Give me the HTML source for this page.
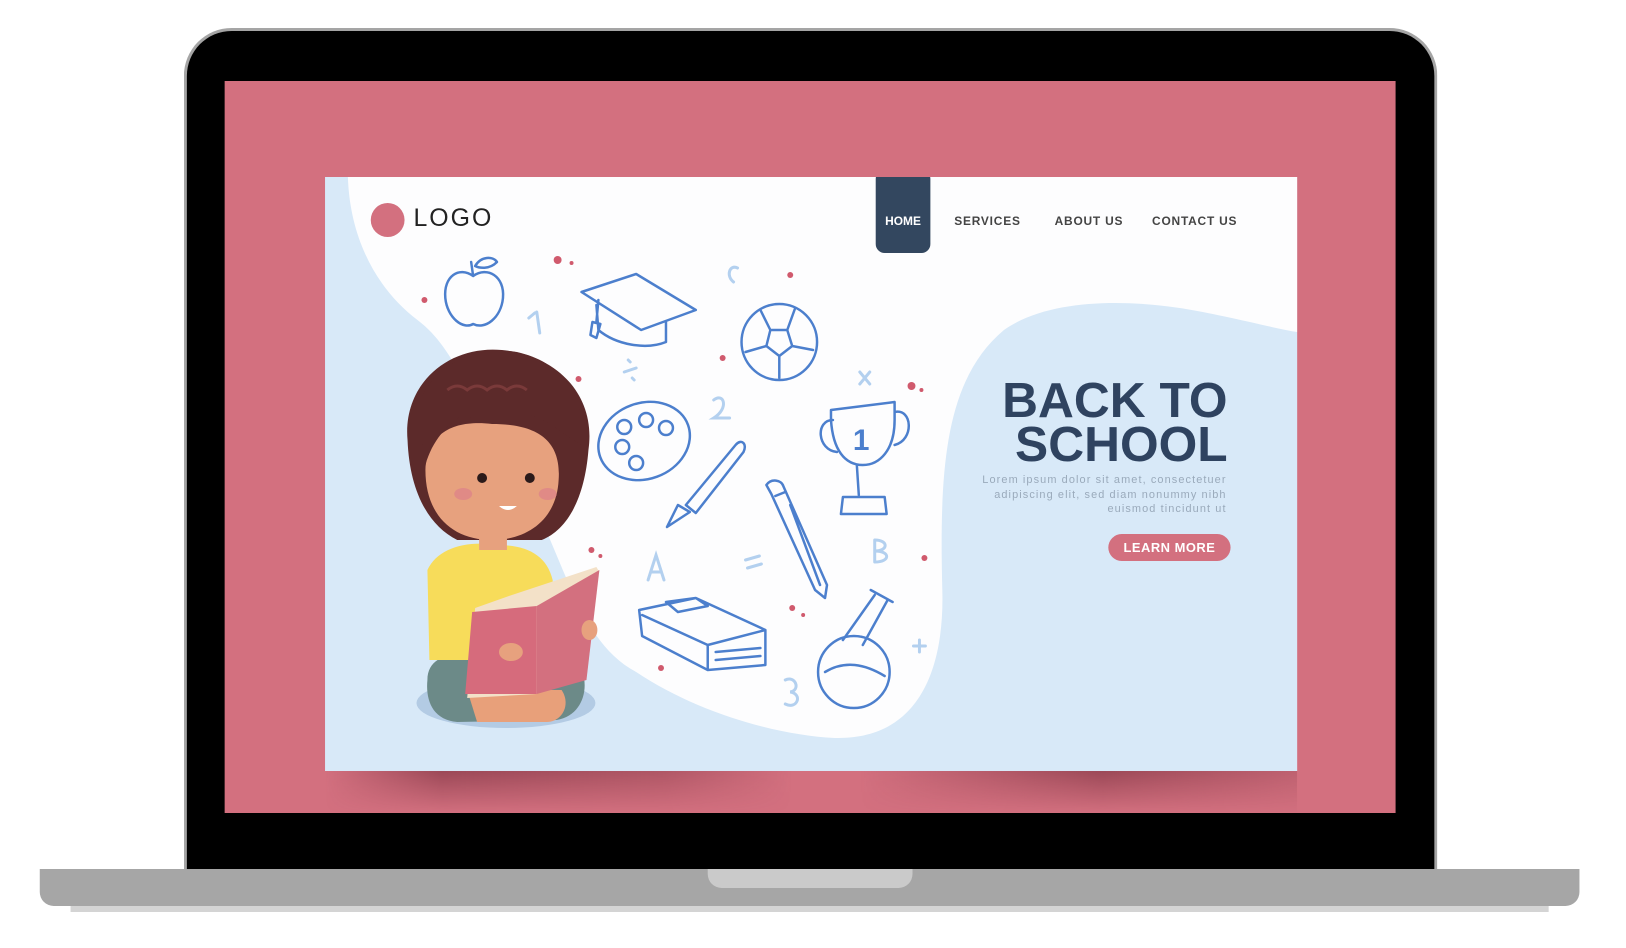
<!DOCTYPE html>
<html><head><meta charset="utf-8"><style>
*{margin:0;padding:0;box-sizing:border-box}
body{width:1626px;height:948px;background:#fff;position:relative;overflow:hidden;font-family:"Liberation Sans",sans-serif}
#w{position:absolute;left:0;top:0;width:1626px;height:948px;transform:scaleX(0.994);transform-origin:0 0}
.bezel{position:absolute;left:185px;top:28px;width:1261px;height:860px;background:#000;border:3px solid #a5a5a5;border-bottom:none;border-radius:48px 48px 0 0}
.pink{position:absolute;left:226px;top:81px;width:1178px;height:732px;background:#d3707f;overflow:hidden}
.base{position:absolute;left:40px;top:869px;width:1549px;height:37px;background:#a6a6a6;border-radius:0 0 14px 14px}
.strip{position:absolute;left:71px;top:906px;width:1487px;height:6px;background:#d4d4d4}
.notch{position:absolute;left:712px;top:869px;width:206px;height:19px;background:#cacaca;border-radius:0 0 14px 14px}
.page{position:absolute;left:327px;top:177px;width:978px;height:594px;background:#d8e9f8;overflow:hidden}
.shadow{position:absolute;left:327px;top:771px;width:978px;height:42px;background:linear-gradient(90deg,rgba(120,50,60,.0),rgba(110,40,55,.55) 12%,rgba(110,40,55,.35) 35%,rgba(0,0,0,0) 48%,rgba(0,0,0,0) 55%,rgba(110,40,55,.55) 80%,rgba(110,40,55,.2) 100%);-webkit-mask:linear-gradient(#000,transparent)}
.t{position:absolute;font-weight:bold}
</style></head><body><div id="w">
<div class="bezel"></div>
<div class="pink"></div>
<div class="shadow"></div>
<div class="page"></div>
<svg width="1626" height="948" style="position:absolute;left:0;top:0">
<defs><clipPath id="pc"><rect x="327" y="177" width="978" height="594"/></clipPath></defs>
<g clip-path="url(#pc)">
<path d="M350 177 C352 240 380 290 420 320 C460 350 470 400 520 470 C570 560 580 640 640 672 C700 712 780 735 840 738 C930 740 950 660 948 590 C945 470 950 380 1010 330 C1060 295 1150 300 1210 312 C1260 322 1290 330 1305 332 L1305 177 Z" fill="#fdfdfe"/>
<ellipse cx="509" cy="703" rx="90" ry="25" fill="#b3cbe4"/>
<path d="M430 680 C430 650 470 650 500 660 L580 660 C595 680 590 715 560 720 L460 722 C435 720 428 700 430 680Z" fill="#6c8a88"/>
<path d="M470 690 L565 690 C575 705 565 722 550 722 L480 722Z" fill="#e8a07a"/>
<path d="M430 570 C440 548 470 540 500 545 C530 545 550 555 556 580 L560 660 L432 660 Z" fill="#f7dc5a"/>
<path d="M410 440 C405 385 450 345 505 350 C560 355 600 395 592 450 C588 500 570 530 545 540 L460 540 C430 525 412 490 410 440Z" fill="#5c2a2a"/>
<path d="M428 470 C430 430 460 420 495 424 C540 424 565 440 562 480 C560 520 530 540 495 540 C455 540 428 515 428 470Z" fill="#e7a17e"/>
<rect x="482" y="530" width="28" height="20" fill="#e7a17e"/>
<path d="M420 410 C430 365 480 345 520 352 C565 362 590 395 585 445 C560 430 540 410 520 415 C500 425 480 420 465 415 C450 425 435 440 428 465Z" fill="#5c2a2a"/>
<path d="M450 390 Q460 382 470 390 Q480 382 490 390 Q500 382 510 390 Q520 382 530 390" fill="none" stroke="#7a3a3a" stroke-width="3"/>
<circle cx="485" cy="478" r="5" fill="#2b1a1a"/><circle cx="533" cy="478" r="5" fill="#2b1a1a"/>
<ellipse cx="466" cy="494" rx="9" ry="6" fill="#e08a86"/><ellipse cx="551" cy="494" rx="9" ry="6" fill="#e08a86"/>
<path d="M502 506 Q511 514 520 506Z" fill="#fff"/>
<path d="M478 608 L512 596 L600 567 L603 572 L540 694 L470 698Z" fill="#f3e1c8"/>
<path d="M475 612 L540 606 L540 694 L468 694Z" fill="#d66b7c"/>
<path d="M540 606 L603 570 L590 680 L540 694Z" fill="#d3707f"/>
<ellipse cx="514" cy="652" rx="12" ry="9" fill="#e7a17e"/><ellipse cx="593" cy="630" rx="8" ry="10" fill="#e7a17e"/>
<g fill="none" stroke="#4c7fcd" stroke-width="2.5" stroke-linecap="round" stroke-linejoin="round">
<path d="M476 276 C462 266 446 276 448 298 C450 318 466 330 476 324 C488 330 504 318 506 298 C508 276 490 266 476 276Z M476 276 L474 262 M478 266 C484 256 496 256 500 262 C492 270 482 268 478 266"/>
<path d="M585 292 L640 274 L700 310 L645 330 Z M600 305 L602 330 C620 345 650 350 670 342 L670 322 M602 300 L600 322 M596 322 L594 335 L600 338 L604 324Z"/>
<circle cx="784" cy="342" r="38"/><path d="M775 330 L792 330 L797 346 L784 356 L771 346Z M775 330 L765 310 M792 330 L800 308 M797 346 L818 350 M784 356 L784 378 M771 346 L750 352"/>
<ellipse cx="648" cy="441" rx="47" ry="38" transform="rotate(-20 648 441)"/>
<circle cx="628" cy="427" r="7"/><circle cx="650" cy="420" r="7"/><circle cx="670" cy="428" r="7"/><circle cx="626" cy="447" r="7"/><circle cx="640" cy="463" r="7"/>
<path d="M671 527 L682 505 L694 512 Z M690 505 L740 445 C746 438 752 444 748 452 L700 513 Z"/>
<path d="M771 485 C776 478 786 480 788 486 L832 585 L830 598 L820 590 L776 494Z M780 496 L790 492 M795 505 L825 585"/>
<path d="M836 410 L900 402 L900 420 C900 450 885 465 868 465 C850 465 838 450 836 420Z M900 412 C918 408 920 440 900 445 M838 420 C820 420 822 450 842 452 M862 465 L864 495 M848 497 L890 497 L892 514 L846 514Z"/>
<text x="858" y="450" font-size="30" font-weight="bold" fill="#4c7fcd" stroke="none" font-family="Liberation Sans">1</text>
<path d="M643 610 L700 598 L770 630 L770 665 L712 670 L646 636 Z M646 615 L712 645 L770 630 M712 645 L712 670 M720 652 L765 648 M720 660 L765 656 M670 602 L700 598 L712 606 L682 612Z"/>
<circle cx="859" cy="672" r="36"/><path d="M848 640 L880 595 M868 645 L893 600 M876 590 L898 602 M830 672 C850 660 870 664 890 676"/>
</g>
<g fill="none" stroke="#b3d0ef" stroke-width="3" stroke-linecap="round">
<path d="M540 312 L543 333 M538 313 L532 318"/><path d="M742 268 C734 264 730 276 738 282"/><path d="M718 400 C728 392 734 408 718 418 L734 418"/>
<path d="M865 372 L875 384 M875 372 L865 384"/><path d="M652 580 L660 555 L668 580 M655 572 L665 572"/><path d="M750 560 L764 556 M752 568 L766 564"/>
<path d="M880 540 L880 562 M880 540 C894 540 894 551 880 551 C896 551 896 562 880 562"/><path d="M790 680 C800 675 806 690 795 692 C808 694 802 710 790 704"/>
<path d="M925 640 L925 652 M919 646 L931 646"/><path d="M628 372 L640 368 M632 360 L634 362 M636 378 L638 380"/>
</g>
<g fill="#d05a6d"><circle cx="561" cy="260" r="4"/><circle cx="575" cy="263" r="2"/><circle cx="427" cy="300" r="3"/><circle cx="795" cy="275" r="3"/><circle cx="727" cy="358" r="3"/><circle cx="917" cy="386" r="4"/><circle cx="927" cy="390" r="2"/><circle cx="595" cy="550" r="3"/><circle cx="604" cy="556" r="2"/><circle cx="797" cy="608" r="3"/><circle cx="808" cy="615" r="2"/><circle cx="665" cy="668" r="3"/><circle cx="930" cy="558" r="3"/><circle cx="582" cy="379" r="3"/></g>
<rect x="881" y="170" width="55" height="83" rx="9" fill="#33475f"/>
<circle cx="390" cy="220" r="17" fill="#d3707f"/>
</g>
</svg>
<div class="t" style="left:416px;top:204px;font-size:25px;font-weight:normal;color:#222;letter-spacing:2px">LOGO</div>
<div class="t" style="left:881px;top:214px;width:55px;text-align:center;font-size:12px;color:#fff">HOME</div>
<div class="t" style="left:960px;top:214px;font-size:12px;color:#444;letter-spacing:.8px">SERVICES</div>
<div class="t" style="left:1061px;top:214px;font-size:12px;color:#444;letter-spacing:.8px">ABOUT US</div>
<div class="t" style="left:1159px;top:214px;font-size:12px;color:#444;letter-spacing:.8px">CONTACT US</div>
<div class="t" style="left:935px;top:379px;width:300px;text-align:right;font-size:49px;line-height:44px;color:#2f4360;transform:scaleX(1.02);transform-origin:100% 0">BACK TO<br>SCHOOL</div>
<div class="t" style="left:900px;top:473px;width:334px;text-align:right;font-size:11px;line-height:14.5px;color:#9aaabb;font-weight:normal;letter-spacing:1.1px">Lorem ipsum dolor sit amet, consectetuer<br>adipiscing elit, sed diam nonummy nibh<br>euismod tincidunt ut</div>
<div class="t" style="left:1115px;top:534px;width:123px;height:27px;border-radius:14px;background:#d3707f;color:#fff;font-size:13px;line-height:27px;text-align:center;letter-spacing:.5px">LEARN MORE</div>
<div class="base"></div>
<div class="strip"></div>
<div class="notch"></div>
</div></body></html>
